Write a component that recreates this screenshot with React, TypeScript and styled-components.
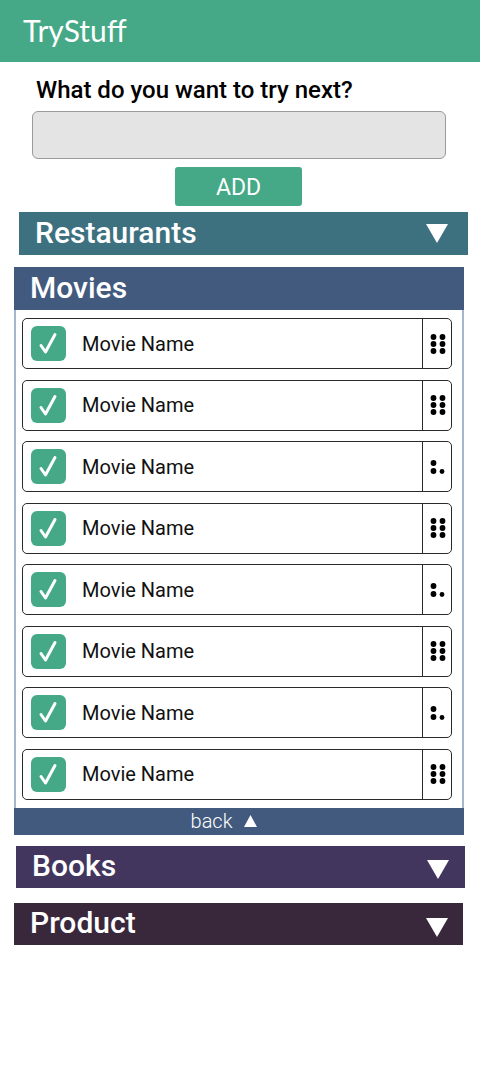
import React from "react";
import styled, { createGlobalStyle } from "styled-components";

const Global = createGlobalStyle`
  html, body { margin: 0; padding: 0; background: #ffffff; }
  body { font-family: Roboto, "Liberation Sans", sans-serif; }
  * { box-sizing: border-box; }
`;

const Page = styled.div`
  width: 481px;
  display: flex;
  flex-direction: column;
  padding-bottom: 40px;
`;

const TopBar = styled.header`
  height: 62px;
  width: 480px;
  background: #45a987;
  display: flex;
  align-items: center;
  padding-left: 23px;
`;

const Brand = styled.h1`
  margin: 0;
  font-family: Lato, "Open Sans", sans-serif;
  font-weight: 400;
  font-size: 30px;
  color: #ffffff;
  line-height: 1;
  padding-bottom: 3px;
`;

const Question = styled.label`
  margin: 15px 0 0 36px;
  font-family: Roboto, sans-serif;
  font-weight: 500;
  font-size: 24px;
  line-height: 26px;
  color: #000;
`;

const Input = styled.input`
  margin: 8px 0 0 32px;
  width: 414px;
  height: 48px;
  background: #e4e4e4;
  border: 1px solid #9a9a9a;
  border-radius: 6px;
  outline: none;
`;

const AddButton = styled.button`
  align-self: flex-start;
  margin: 8px 0 0 175px;
  width: 127px;
  height: 39px;
  background: #45a987;
  border: none;
  border-radius: 3px;
  color: #fff;
  font-family: Roboto, sans-serif;
  font-size: 23px;
  font-weight: 400;
  padding-top: 2px;
`;

const CategoryBar = styled.div<{ $bg: string; $left: number; $top: number; $h: number; $pr: number }>`
  margin: ${(p) => p.$top}px 0 0 ${(p) => p.$left}px;
  width: 449px;
  height: ${(p) => p.$h}px;
  background: ${(p) => p.$bg};
  display: flex;
  align-items: center;
  justify-content: space-between;
  padding: 0 ${(p) => p.$pr}px 0 16px;
  color: #fff;
`;

const CategoryTitle = styled.span`
  font-family: Roboto, sans-serif;
  font-weight: 500;
  font-size: 30px;
  line-height: 1;
  padding-bottom: 2px;
`;

const Arrow = styled.span<{ $dy: number }>`
  display: flex;
  margin-top: ${(p) => p.$dy}px;
`;

const Panel = styled.section`
  margin: 12px 0 0 14px;
  width: 450px;
  display: flex;
  flex-direction: column;
`;

const PanelHeader = styled.div`
  height: 43px;
  background: #425a7e;
  color: #fff;
  display: flex;
  align-items: center;
  padding-left: 16px;
`;

const PanelBody = styled.div`
  border-left: 2px solid #a8b6cd;
  border-right: 2px solid #a8b6cd;
  padding: 8px 10px 8px 6px;
  display: flex;
  flex-direction: column;
  gap: 10.57px;
`;

const Row = styled.div`
  height: 51px;
  border: 1px solid #2a2a2a;
  border-radius: 5px;
  display: flex;
  align-items: center;
  background: #fff;
`;

const Check = styled.div`
  width: 35px;
  height: 35px;
  margin-left: 8px;
  border-radius: 6px;
  background: #45a987;
  display: flex;
  align-items: center;
  justify-content: center;
  flex-shrink: 0;
`;

const RowLabel = styled.span`
  flex: 1;
  margin-left: 16px;
  font-family: Roboto, sans-serif;
  font-size: 20px;
  font-weight: 400;
  color: #111;
`;

const Handle = styled.div`
  width: 29px;
  height: 100%;
  border-left: 1px solid #2a2a2a;
  display: flex;
  align-items: center;
  justify-content: center;
  padding-left: 2px;
`;

const Footer = styled.div`
  height: 27px;
  background: #425a7e;
  color: #fff;
  display: flex;
  align-items: center;
  justify-content: center;
  gap: 12px;
  padding-right: 30px;
  font-family: Roboto, sans-serif;
  font-weight: 300;
  font-size: 20px;
`;

const Down = () => (
  <svg width="22" height="19" viewBox="0 0 22 19">
    <polygon points="0,0 22,0 11,19" fill="#fff" />
  </svg>
);

const Up = () => (
  <svg width="13" height="12" viewBox="0 0 13 12">
    <polygon points="0,12 13,12 6.5,0" fill="#fff" />
  </svg>
);

const CheckMark = () => (
  <svg width="35" height="35" viewBox="0 0 35 35">
    <path d="M10 19.5 L14.5 26 L24 8.5" fill="none" stroke="#fff" strokeWidth="3" strokeLinecap="round" strokeLinejoin="round" />
  </svg>
);

const Dots = ({ full }: { full: boolean }) => (
  <svg width="18" height="22" viewBox="0 0 18 22">
    {full ? (
      <>
        <circle cx="4.5" cy="4" r="2.9" fill="#000" />
        <circle cx="13.5" cy="4" r="2.9" fill="#000" />
        <circle cx="4.5" cy="11" r="2.9" fill="#000" />
        <circle cx="13.5" cy="11" r="2.9" fill="#000" />
        <circle cx="4.5" cy="18" r="2.9" fill="#000" />
        <circle cx="13.5" cy="18" r="2.9" fill="#000" />
      </>
    ) : (
      <>
        <circle cx="4.5" cy="7" r="2.9" fill="#000" />
        <circle cx="4.5" cy="15" r="2.9" fill="#000" />
        <circle cx="13" cy="15.5" r="2.4" fill="#000" />
      </>
    )}
  </svg>
);

const movies = [true, true, false, true, false, true, false, true];

export default function App() {
  return (
    <Page>
      <Global />
      <TopBar>
        <Brand>TryStuff</Brand>
      </TopBar>
      <Question>What do you want to try next?</Question>
      <Input />
      <AddButton>ADD</AddButton>
      <CategoryBar $bg="#3d7180" $left={19} $top={6} $h={43} $pr={20}>
        <CategoryTitle>Restaurants</CategoryTitle>
        <Arrow $dy={0}>
          <Down />
        </Arrow>
      </CategoryBar>
      <Panel>
        <PanelHeader>
          <CategoryTitle>Movies</CategoryTitle>
        </PanelHeader>
        <PanelBody>
          {movies.map((full, i) => (
            <Row key={i}>
              <Check>
                <CheckMark />
              </Check>
              <RowLabel>Movie Name</RowLabel>
              <Handle>
                <Dots full={full} />
              </Handle>
            </Row>
          ))}
        </PanelBody>
        <Footer>
          <span>back</span>
          <Up />
        </Footer>
      </Panel>
      <CategoryBar $bg="#42365f" $left={16} $top={11} $h={42} $pr={16}>
        <CategoryTitle>Books</CategoryTitle>
        <Arrow $dy={5}>
          <Down />
        </Arrow>
      </CategoryBar>
      <CategoryBar $bg="#39283b" $left={14} $top={15} $h={42} $pr={15}>
        <CategoryTitle>Product</CategoryTitle>
        <Arrow $dy={7}>
          <Down />
        </Arrow>
      </CategoryBar>
    </Page>
  );
}
